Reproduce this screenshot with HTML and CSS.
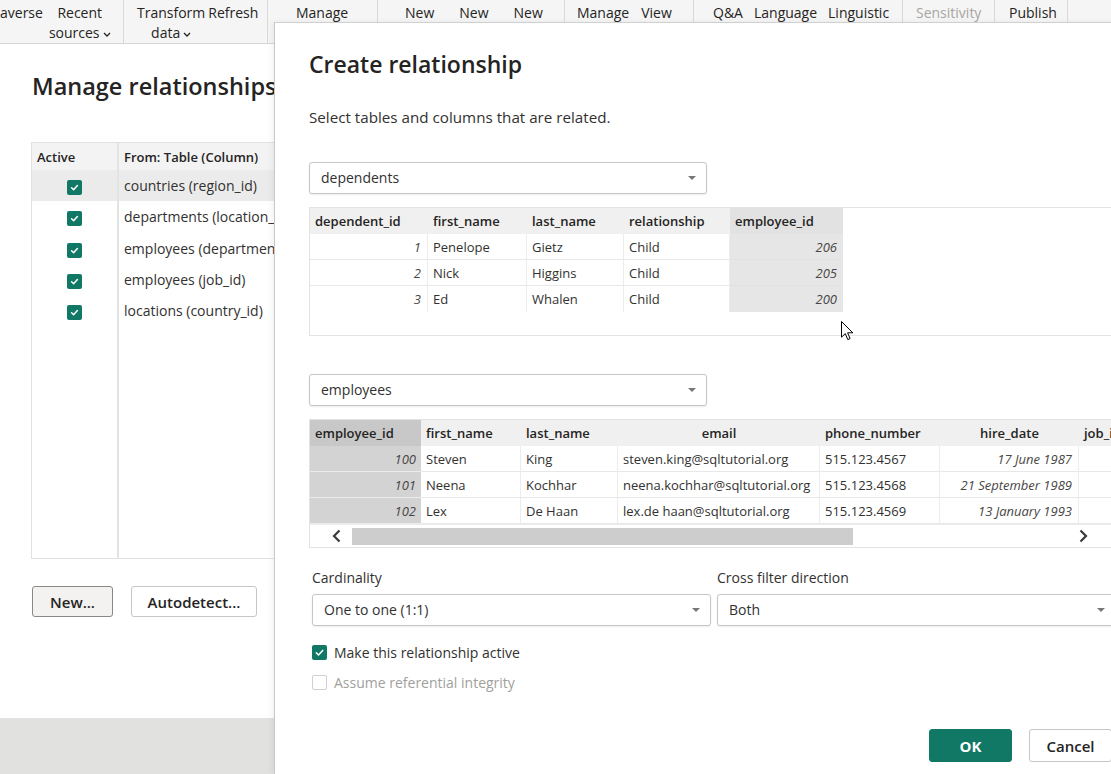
FILE: index.html
```html
<!DOCTYPE html>
<html lang="en">
<head>
<meta charset="utf-8">
<title>Manage relationships</title>
<link rel="stylesheet" href="styles.css">
</head>
<body>
<header class="ribbon">
  <div class="rgroup g1">
    <span class="ritem">averse</span>
    <span class="ritem stack">Recent<span>sources<svg class="chev" viewBox="0 0 8 5"><polyline points="1,1 4,4 7,1"/></svg></span></span>
  </div>
  <div class="rgroup g2">
    <span class="ritem stack">Transform<span>data<svg class="chev" viewBox="0 0 8 5"><polyline points="1,1 4,4 7,1"/></svg></span></span>
    <span class="ritem">Refresh</span>
  </div>
  <div class="rgroup g3"><span class="ritem">Manage</span></div>
  <div class="rgroup g4"><span class="ritem">New</span><span class="ritem">New</span><span class="ritem">New</span></div>
  <div class="rgroup g5"><span class="ritem">Manage</span><span class="ritem">View</span></div>
  <div class="rgroup g6"><span class="ritem">Q&amp;A</span><span class="ritem">Language</span><span class="ritem">Linguistic</span></div>
  <div class="rgroup g7"><span class="ritem muted">Sensitivity</span></div>
  <div class="rgroup g8"><span class="ritem">Publish</span></div>
  <div class="rgroup g9"></div>
</header>

<main class="left">
  <h1 class="page-title">Manage relationships</h1>
  <div class="rel-table">
    <div class="rel-row head"><div class="rc active">Active</div><div class="rc from">From: Table (Column)</div></div>
    <div class="rel-row selected"><div class="rc active"><svg class="cb" viewBox="0 0 15 15"><rect width="15" height="15" rx="2"/><polyline points="4.6,7.8 6.6,9.7 10.4,5.6"/></svg></div><div class="rc from">countries (region_id)</div></div>
    <div class="rel-row"><div class="rc active"><svg class="cb" viewBox="0 0 15 15"><rect width="15" height="15" rx="2"/><polyline points="4.6,7.8 6.6,9.7 10.4,5.6"/></svg></div><div class="rc from">departments (location_id)</div></div>
    <div class="rel-row"><div class="rc active"><svg class="cb" viewBox="0 0 15 15"><rect width="15" height="15" rx="2"/><polyline points="4.6,7.8 6.6,9.7 10.4,5.6"/></svg></div><div class="rc from">employees (department_id)</div></div>
    <div class="rel-row"><div class="rc active"><svg class="cb" viewBox="0 0 15 15"><rect width="15" height="15" rx="2"/><polyline points="4.6,7.8 6.6,9.7 10.4,5.6"/></svg></div><div class="rc from">employees (job_id)</div></div>
    <div class="rel-row"><div class="rc active"><svg class="cb" viewBox="0 0 15 15"><rect width="15" height="15" rx="2"/><polyline points="4.6,7.8 6.6,9.7 10.4,5.6"/></svg></div><div class="rc from">locations (country_id)</div></div>
    <div class="rel-row fill"><div class="rc active"></div><div class="rc from"></div></div>
  </div>
  <div class="left-actions">
    <button class="btn btn-new">New...</button>
    <button class="btn btn-auto">Autodetect...</button>
  </div>
  <div class="left-footer"></div>
</main>

<section class="dialog">
  <h2 class="dlg-title">Create relationship</h2>
  <p class="dlg-sub">Select tables and columns that are related.</p>

  <div class="select table-select"><span>dependents</span><svg class="caret" viewBox="0 0 8 4"><polygon points="0,0 8,0 4,4"/></svg></div>
  <div class="grid-box">
    <div class="grid-clip">
      <table class="preview t1">
        <colgroup><col class="c118"><col class="c99"><col class="c97"><col class="c106"><col class="c113"></colgroup>
        <thead><tr><th>dependent_id</th><th>first_name</th><th>last_name</th><th>relationship</th><th class="sel">employee_id</th></tr></thead>
        <tbody>
          <tr><td class="num">1</td><td>Penelope</td><td>Gietz</td><td>Child</td><td class="num sel">206</td></tr>
          <tr><td class="num">2</td><td>Nick</td><td>Higgins</td><td>Child</td><td class="num sel">205</td></tr>
          <tr><td class="num">3</td><td>Ed</td><td>Whalen</td><td>Child</td><td class="num sel">200</td></tr>
        </tbody>
      </table>
    </div>
  </div>

  <div class="select table-select second"><span>employees</span><svg class="caret" viewBox="0 0 8 4"><polygon points="0,0 8,0 4,4"/></svg></div>
  <div class="grid-box">
    <div class="grid-clip">
      <table class="preview t2">
        <colgroup><col class="c111"><col class="c100"><col class="c97"><col class="c202"><col class="c120"><col class="c139"><col class="c140"></colgroup>
        <thead><tr><th class="sel">employee_id</th><th>first_name</th><th>last_name</th><th class="center">email</th><th>phone_number</th><th class="center">hire_date</th><th>job_id</th></tr></thead>
        <tbody>
          <tr><td class="num sel">100</td><td>Steven</td><td>King</td><td>steven.king@sqltutorial.org</td><td>515.123.4567</td><td class="num">17 June 1987</td><td class="num">1</td></tr>
          <tr><td class="num sel">101</td><td>Neena</td><td>Kochhar</td><td>neena.kochhar@sqltutorial.org</td><td>515.123.4568</td><td class="num">21 September 1989</td><td class="num">2</td></tr>
          <tr><td class="num sel">102</td><td>Lex</td><td>De Haan</td><td>lex.de haan@sqltutorial.org</td><td>515.123.4569</td><td class="num">13 January 1993</td><td class="num">2</td></tr>
        </tbody>
      </table>
    </div>
    <div class="hscroll">
      <span class="sb-btn sb-left"><svg viewBox="0 0 9 14"><polyline points="7.5,1.5 2,7 7.5,12.5"/></svg></span>
      <span class="sb-thumb"></span>
      <span class="sb-track"></span>
      <span class="sb-btn sb-right"><svg viewBox="0 0 9 14"><polyline points="1.5,1.5 7,7 1.5,12.5"/></svg></span>
    </div>
  </div>

  <div class="fields">
    <div class="field card">
      <label class="field-label">Cardinality</label>
      <div class="select"><span>One to one (1:1)</span><svg class="caret" viewBox="0 0 8 4"><polygon points="0,0 8,0 4,4"/></svg></div>
    </div>
    <div class="field cross">
      <label class="field-label">Cross filter direction</label>
      <div class="select"><span>Both</span><svg class="caret" viewBox="0 0 8 4"><polygon points="0,0 8,0 4,4"/></svg></div>
    </div>
  </div>

  <div class="check-row first">
    <svg class="cb" viewBox="0 0 15 15"><rect width="15" height="15" rx="2"/><polyline points="4.3,7.8 6.5,10 10.7,5.4"/></svg>
    <span>Make this relationship active</span>
  </div>
  <div class="check-row disabled">
    <span class="cb-empty"></span>
    <span>Assume referential integrity</span>
  </div>

  <div class="dlg-actions">
    <button class="btn btn-ok">OK</button>
    <button class="btn btn-cancel">Cancel</button>
  </div>
</section>

<svg class="cursor" viewBox="0 0 13 20"><path d="M0.5 0.5 L0.5 16.2 L4.3 12.6 L6.8 18.6 L9.1 17.6 L6.6 11.8 L11.8 11.8 Z"/></svg>
</body>
</html>
```

FILE: styles.css
```css
* { box-sizing: border-box; }
html, body { margin: 0; padding: 0; }
body {
  width: 1111px;
  height: 774px;
  overflow: hidden;
  position: relative;
  background: #fff;
  color: #252423;
  font-family: "Open Sans", "Noto Sans", sans-serif;
}

/* ---------- ribbon ---------- */
.ribbon {
  height: 44px;
  display: flex;
  background: #f5f5f5;
  border-bottom: 1px solid #d6d6d6;
  font-size: 14px;
  line-height: 20px;
  white-space: nowrap;
}
.rgroup {
  flex: none;
  display: flex;
  align-items: flex-start;
  padding-top: 3px;
  border-right: 1px solid #d9d9d9;
}
.ritem { display: flex; flex-direction: column; align-items: center; }
.ritem.muted { color: #a8a6a4; }
.chev { width: 8px; height: 5px; margin-left: 3px; vertical-align: middle; fill: none; stroke: #252423; stroke-width: 1.3; }
.g1 { width: 124px; padding-left: 0; gap: 6px; }
.g2 { width: 144px; padding-left: 13px; gap: 3px; }
.g3 { width: 110px; padding-left: 28px; }
.g4 { width: 187px; padding-left: 27px; gap: 25px; }
.g5 { width: 129px; padding-left: 12px; gap: 12px; }
.g6 { width: 209px; padding-left: 19px; gap: 11px; }
.g7 { width: 92px; padding-left: 13px; }
.g8 { width: 73px; padding-left: 14px; }
.g9 { flex: 1; border-right: none; }

/* ---------- left page ---------- */
.left {
  width: 274px;
  height: 730px;
  overflow: hidden;
  display: flex;
  flex-direction: column;
}
.page-title {
  margin: 25px 0 0 32px;
  font-size: 23.5px;
  line-height: 34px;
  font-weight: 600;
  color: #252423;
  white-space: nowrap;
}
.rel-table {
  margin: 39px 0 0 31px;
  width: 400px;
  height: 417px;
  flex: none;
  display: flex;
  flex-direction: column;
  border: 1px solid #e1e1e1;
  border-right: none;
}
.rel-row { display: flex; height: 31.3px; flex: none; }
.rel-row.head { height: 27px; background: #f3f3f3; font-size: 13px; font-weight: 600; }
.rel-row.selected { background: #ebebeb; }
.rel-row.fill { flex: 1; }
.rc { display: flex; align-items: center; }
.rc.active { width: 87px; border-right: 2px solid #e3e3e3; justify-content: center; flex: none; }
.rel-row.head .rc.active { justify-content: flex-start; padding-left: 5px; }
.rc.from { flex: 1; padding-left: 5px; font-size: 14px; color: #323130; white-space: nowrap; }
.rel-row.head .rc.from { font-size: 13px; color: #252423; }
.rel-row .cb { margin: 4px 0 0 -1px; }
.cb { width: 15px; height: 15px; flex: none; }
.cb rect { fill: #117865; }
.cb polyline { fill: none; stroke: #fff; stroke-width: 1.5; stroke-linecap: round; stroke-linejoin: round; }

.left-actions { display: flex; gap: 18px; margin: 27px 0 0 32px; }
.btn {
  font-family: inherit;
  font-size: 15px;
  font-weight: 600;
  height: 31px;
  border-radius: 3px;
  border: 1px solid #c8c6c4;
  background: #fff;
  color: #252423;
  padding: 0;
  cursor: default;
}
.btn-new { width: 81px; background: #f3f2f1; border-color: #8a8886; }
.btn-auto { width: 126px; }
.left-footer { margin-top: auto; height: 56px; background: #e1e1df; flex: none; }

/* ---------- dialog ---------- */
.dialog {
  position: absolute;
  left: 274px;
  top: 22px;
  width: 872px;
  height: 752px;
  background: #fff;
  border-left: 1px solid #c8c8c8;
  border-top: 1px solid #d0d0d0;
  box-shadow: -2px 0 6px rgba(0, 0, 0, 0.06);
  padding: 25px 34px 0 34px;
  display: flex;
  flex-direction: column;
  align-items: stretch;
}
.dlg-title {
  margin: 0;
  font-size: 23px;
  line-height: 32px;
  font-weight: 600;
  color: #252423;
}
.dlg-sub {
  margin: 27px 0 0 0;
  font-size: 15.2px;
  line-height: 20px;
  color: #323130;
}
.select {
  height: 32px;
  border: 1px solid #c8c6c4;
  border-radius: 3px;
  box-shadow: 0 1px 2px rgba(0, 0, 0, 0.08);
  background: #fff;
  display: flex;
  align-items: center;
  justify-content: space-between;
  padding: 0 10px 0 11px;
  font-size: 14px;
  color: #323130;
  white-space: nowrap;
}
.select span { margin-top: -2px; }
.caret { width: 8px; height: 4px; fill: #797775; flex: none; }
.table-select { width: 398px; margin-top: 35px; flex: none; }
.table-select.second { margin-top: 38px; }

.grid-box {
  margin-top: 13px;
  width: calc(100% + 4px);
  height: 129px;
  flex: none;
  border: 1px solid #e3e3e3;
  overflow: hidden;
  display: flex;
  flex-direction: column;
}
.grid-clip { overflow: hidden; flex: none; height: 104px; }
.preview {
  border-collapse: separate;
  border-spacing: 0;
  table-layout: fixed;
  font-size: 13px;
  color: #323130;
  white-space: nowrap;
}
.t1 { width: 533px; }
.t2 { width: 909px; }
.preview tr { height: 26px; }
.preview th {
  text-align: left;
  font-weight: 600;
  color: #252423;
  background: #f0f0f0;
  padding: 0 5px 0 5px;
  overflow: hidden;
}
.preview th.center { text-align: center; }
.preview td {
  padding: 0 6px 0 5px;
  border-bottom: 1px solid #e8e8e8;
  border-right: 1px solid #ececec;
  overflow: hidden;
}
.preview td.num { text-align: right; font-style: italic; color: #484644; }
.t1 td.sel { background: #e6e6e6; border-right: none; border-bottom-color: #e2e2e2; }
.t1 th.sel { background: #e2e2e2; }
.t1 tbody tr:last-child td { border-bottom: none; }
.t2 th.sel { background: #c8c8c8; }
.t2 td.sel { background: #d3d3d3; border-bottom-color: #ececec; border-right: none; }
.t2 td.num.sel { padding-right: 5px; }

.c118 { width: 118px; } .c99 { width: 99px; } .c97 { width: 97px; } .c106 { width: 106px; } .c113 { width: 113px; }
.c111 { width: 111px; } .c100 { width: 100px; } .c202 { width: 202px; } .c120 { width: 120px; } .c139 { width: 139px; } .c140 { width: 140px; }

.hscroll { flex: 1; display: flex; align-items: center; background: #fff; border-top: 1px solid #ececec; }
.sb-btn { display: flex; align-items: center; flex: none; }
.sb-btn svg { width: 9px; height: 14px; fill: none; stroke: #3b3a39; stroke-width: 2.2; }
.sb-left { width: 42px; padding-left: 22px; }
.sb-thumb { width: 501px; height: 17px; background: #cdcdcd; flex: none; }
.sb-track { flex: 1; }
.sb-right { width: 40px; padding-left: 4px; }

.fields { display: flex; gap: 6px; margin-top: 20px; padding-left: 3px; margin-right: -4px; }
.field { display: flex; flex-direction: column; }
.field.card { width: 399px; }
.field.cross { flex: 1; }
.field-label { font-size: 14px; line-height: 20px; color: #323130; margin-bottom: 6px; }

.check-row { display: flex; align-items: center; gap: 7px; height: 20px; padding-left: 3px; font-size: 14px; color: #323130; }
.check-row.first { margin-top: 16px; }
.check-row.disabled { margin-top: 10px; color: #a19f9d; }
.cb-empty { width: 15px; height: 15px; border: 1px solid #d2d0ce; border-radius: 2px; flex: none; }

.dlg-actions { display: flex; justify-content: flex-end; gap: 17px; margin-top: 37px; }
.btn-ok { width: 83px; height: 33px; background: #117865; border-color: #117865; color: #fff; font-weight: 700; }
.btn-cancel { width: 83px; height: 33px; }

.cursor {
  position: absolute;
  left: 841px;
  top: 321px;
  width: 13px;
  height: 20px;
  fill: #fff;
  stroke: #000;
  stroke-width: 1;
}
```
